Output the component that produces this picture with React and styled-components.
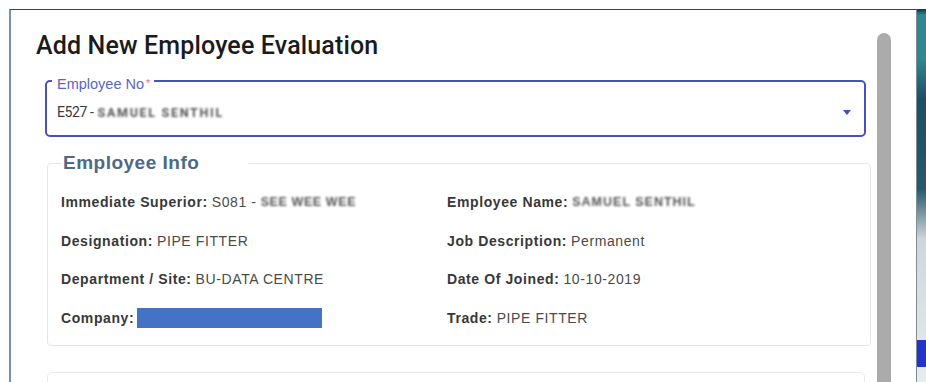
import React from "react";
import styled, { createGlobalStyle } from "styled-components";

const Global = createGlobalStyle`
  html, body { margin: 0; padding: 0; background: #ffffff; }
  body { font-family: "Liberation Sans", Arial, sans-serif; }
  * { box-sizing: border-box; }
`;

const Page = styled.div`
  width: 926px;
  height: 382px;
  overflow: hidden;
  display: flex;
  padding: 9px 0 0 9px;
  background: #ffffff;
`;

const Dialog = styled.div`
  flex: 0 0 908px;
  display: flex;
  background: #ffffff;
  border-top: 1px solid #3c4446;
  border-left: 2px solid #6f979d;
  border-right: 1px solid #7f8d90;
`;

const Content = styled.div`
  flex: 0 0 860px;
  padding: 22px 0 0 25px;
  display: flex;
  flex-direction: column;
  overflow: hidden;
`;

const Title = styled.h2`
  margin: 0;
  font-family: Roboto, "Liberation Sans", sans-serif;
  font-weight: 500;
  font-size: 25px;
  line-height: 28px;
  color: #1b1b1b;
  letter-spacing: 0.15px;
`;

const SelectBox = styled.fieldset`
  margin: 9px 5px 0 9px;
  padding: 0 13px 13px 10px;
  border: 2px solid #4553c0;
  border-radius: 5px;
  min-inline-size: 0;
`;

const FloatLabel = styled.legend`
  margin-left: -5px;
  padding: 6px 4px 0 5px;
  font-family: "Liberation Sans", Arial, sans-serif;
  font-size: 14.5px;
  line-height: 16px;
  color: #5866c8;
`;

const Req = styled.span`
  color: #ef6d7a;
  font-size: 11px;
  margin-left: 2px;
  vertical-align: 2px;
`;

const SelectRow = styled.div`
  margin-top: 10px;
  height: 20px;
  display: flex;
  align-items: center;
  justify-content: space-between;
`;

const SelectValue = styled.span`
  font-family: Roboto, "Liberation Sans", sans-serif;
  font-size: 14px;
  letter-spacing: -0.4px;
  color: #3a3a3a;
`;

const Masked = styled.span`
  display: inline-block;
  filter: blur(1px);
  color: #555555;
  font-size: 12.5px;
  font-weight: 700;
  letter-spacing: ${(p) => p.$ls || "0px"};
  margin-left: ${(p) => p.$gap || "0px"};
`;

const Caret = styled.svg`
  width: 8px;
  height: 5px;
  flex: none;
`;

const InfoBox = styled.fieldset`
  margin: 15px 0 0 11px;
  padding: 9px 13px 8px 13px;
  border: 1px solid #e4e6e8;
  border-radius: 4px;
  min-inline-size: 0;
`;

const InfoLegend = styled.legend`
  padding: 0 50px 0 2px;
  font-family: "Liberation Sans", Arial, sans-serif;
  font-weight: 700;
  font-size: 19px;
  line-height: 22px;
  letter-spacing: 0.5px;
  color: #4c6987;
`;

const InfoGrid = styled.div`
  display: grid;
  grid-template-columns: 386px 1fr;
  grid-auto-rows: 38.5px;
  align-items: center;
`;

const InfoItem = styled.div`
  font-family: "Liberation Sans", Arial, sans-serif;
  font-size: 14px;
  letter-spacing: 0.6px;
  color: #4a4a4a;
  white-space: nowrap;
  display: flex;
  align-items: center;
`;

const Key = styled.b`
  font-weight: 700;
  color: #383838;
  margin-right: 4px;
`;

const Redacted = styled.span`
  display: inline-block;
  width: 185px;
  height: 20px;
  background: #4472c4;
  margin-left: -1px;
`;

const NextCard = styled.div`
  margin: 26px 6px 0 11px;
  height: 40px;
  flex: none;
  border: 1px solid #e6e8ea;
  border-radius: 5px;
`;

const Scrollbar = styled.div`
  flex: 0 0 14px;
  margin: 23px 0 0 6px;
  background: #ababab;
  border-radius: 7px 7px 0 0;
`;

const Strip = styled.div`
  flex: 0 0 9px;
  display: flex;
  flex-direction: column;
  background: linear-gradient(
    to bottom,
    #14343a 0px,
    #2f8794 6px,
    #2f8794 50px,
    #1b4f68 90px,
    #24596e 180px,
    #cfd6d9 230px,
    #e8ecee 100%
  );
`;

const StripMark = styled.div`
  margin-top: 331px;
  height: 27px;
  background: #2334c8;
`;

const rows = [
  { k: "Immediate Superior:", v: "S081 -", mask: "SEE WEE WEE", ls: "0.6px" },
  { k: "Employee Name:", mask: "SAMUEL  SENTHIL", ls: "1px" },
  { k: "Designation:", v: "PIPE FITTER" },
  { k: "Job Description:", v: "Permanent" },
  { k: "Department / Site:", v: "BU-DATA CENTRE" },
  { k: "Date Of Joined:", v: "10-10-2019" },
  { k: "Company:", redacted: true },
  { k: "Trade:", v: "PIPE FITTER" },
];

export default function App() {
  return (
    <>
      <Global />
      <Page>
        <Dialog>
          <Content>
            <Title>Add New Employee Evaluation</Title>
            <SelectBox>
              <FloatLabel>
                Employee No<Req>*</Req>
              </FloatLabel>
              <SelectRow>
                <SelectValue>
                  E527 -
                  <Masked $ls="1.7px" $gap="4px">
                    SAMUEL SENTHIL
                  </Masked>
                </SelectValue>
                <Caret viewBox="0 0 8 5">
                  <path d="M0 0 L8 0 L4 5 Z" fill="#3f4fbf" />
                </Caret>
              </SelectRow>
            </SelectBox>
            <InfoBox>
              <InfoLegend>Employee Info</InfoLegend>
              <InfoGrid>
                {rows.map((it, i) => (
                  <InfoItem key={i}>
                    <Key>{it.k}</Key>
                    {it.v ? <span>{it.v}</span> : null}
                    {it.mask ? (
                      <Masked $ls={it.ls} $gap={it.v ? "4px" : "0px"}>
                        {it.mask}
                      </Masked>
                    ) : null}
                    {it.redacted ? <Redacted /> : null}
                  </InfoItem>
                ))}
              </InfoGrid>
            </InfoBox>
            <NextCard />
          </Content>
          <Scrollbar />
        </Dialog>
        <Strip>
          <StripMark />
        </Strip>
      </Page>
    </>
  );
}
